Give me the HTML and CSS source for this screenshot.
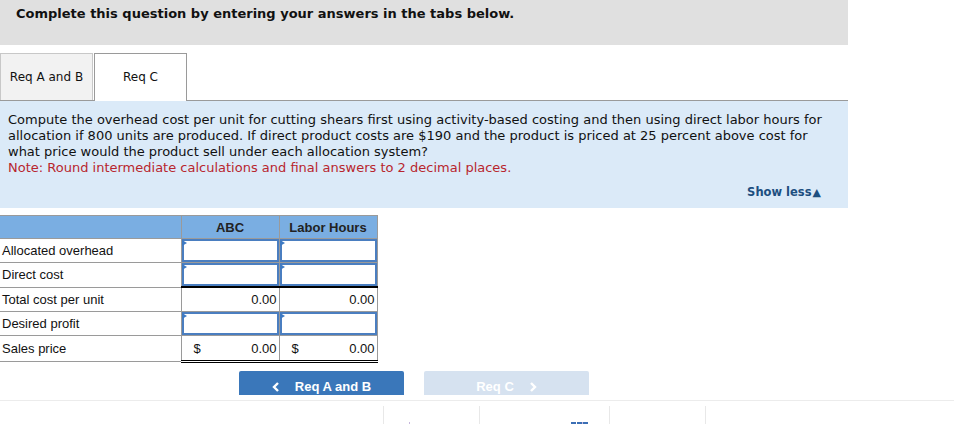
FILE: index.html
```html
<!DOCTYPE html>
<html>
<head>
<meta charset="utf-8">
<link rel="stylesheet" href="styles.css">
</head>
<body>
<div class="wrap">
  <div class="banner">Complete this question by entering your answers in the tabs below.</div>
  <div class="tabs">
    <div class="tab">Req A and B</div>
    <div class="tab active">Req C</div>
  </div>
  <div class="panel">
    <p class="q">Compute the overhead cost per unit for cutting shears first using activity-based costing and then using direct labor hours for allocation if 800 units are produced. If direct product costs are $190 and the product is priced at 25 percent above cost for what price would the product sell under each allocation system?</p>
    <p class="note">Note: Round intermediate calculations and final answers to 2 decimal places.</p>
    <div class="showless">Show less<span class="tri">&#9650;</span></div>
  </div>
  <table class="grid">
    <colgroup><col class="c-label"><col class="c-val"><col class="c-val"></colgroup>
    <thead>
      <tr><th class="h-label"></th><th>ABC</th><th>Labor Hours</th></tr>
    </thead>
    <tbody>
      <tr><td class="label">Allocated overhead</td><td class="inp"><div class="box"></div></td><td class="inp"><div class="box"></div></td></tr>
      <tr><td class="label">Direct cost</td><td class="inp"><div class="box"></div></td><td class="inp"><div class="box"></div></td></tr>
      <tr><td class="label">Total cost per unit</td><td class="calc">0.00</td><td class="calc">0.00</td></tr>
      <tr><td class="label">Desired profit</td><td class="inp"><div class="box"></div></td><td class="inp"><div class="box"></div></td></tr>
      <tr class="final"><td class="label">Sales price</td><td class="calc money"><span>$</span><span>0.00</span></td><td class="calc money"><span>$</span><span>0.00</span></td></tr>
    </tbody>
  </table>
  <div class="nav">
    <div class="btn primary"><svg class="chev" width="8" height="10" viewBox="0 0 8 10"><polyline points="6,1 2,5 6,9" fill="none" stroke="#fff" stroke-width="2.4"/></svg>Req A and B</div>
    <div class="btn disabled">Req C<svg class="chev r" width="8" height="10" viewBox="0 0 8 10"><polyline points="2,1 6,5 2,9" fill="none" stroke="#fff" stroke-width="2.4"/></svg></div>
  </div>
</div>
<div class="footer">
  <div class="seg s1"></div>
  <div class="seg s2"><span class="dot d1"></span></div>
  <div class="seg s3"><span class="bars"><i></i><i></i><i></i></span></div>
  <div class="seg s4"><span class="dot d2"></span></div>
  <div class="seg s5"></div>
</div>
</body>
</html>
```

FILE: styles.css
```css
html, body { margin: 0; padding: 0; background: #fff; }
body { width: 954px; height: 424px; overflow: hidden; }
.wrap { width: 848px; }
.banner {
  background: #e0e0e0;
  height: 45px;
  box-sizing: border-box;
  padding: 6px 16px 0;
  font: bold 13px/16px "DejaVu Sans", sans-serif;
  color: #111;
}
.tabs {
  margin-top: 8px;
  display: flex;
  gap: 1px;
  height: 47px;
  border-bottom: 1px solid #9a9a9a;
}
.tab {
  width: 91px;
  height: 46px;
  border: 1px solid #c8c8c8;
  border-bottom: none;
  background: #f2f2f2;
  font: 12px/46px "DejaVu Sans", sans-serif;
  text-align: center;
  color: #111;
}
.tab.active {
  background: #fff;
  border-color: #9a9a9a;
  height: 47px;
  margin-bottom: -1px;
  position: relative;
}
.panel {
  background: #dbeaf8;
  height: 107px;
  box-sizing: border-box;
  padding: 11px 20px 0 8px;
  font: 13px/16px "DejaVu Sans", sans-serif;
  color: #111;
}
.panel p { margin: 0; }
.note { color: #b8262e; }
.showless {
  text-align: right;
  margin-top: 8px;
  margin-right: 7px;
  font: bold 11.5px/16px "DejaVu Sans", sans-serif;
  color: #1d4f80;
}
.tri { font-size: 11px; margin-left: 1px; }
.grid {
  margin-top: 7px;
  border-collapse: collapse;
  table-layout: fixed;
  width: 377px;
  font: 13px "Liberation Sans", Arial, sans-serif;
  color: #111;
}
.c-label { width: 181px; }
.c-val { width: 98px; }
.grid th {
  background: #7aaee2;
  height: 22px;
  border: 1px solid #9a9a9a;
  font-weight: bold;
  padding: 0;
  text-align: center;
  color: #222;
}
.grid th.h-label { border-left: none; }
.grid td { padding: 0; height: 23px; }
.grid td.label {
  border-bottom: 1px solid #9a9a9a;
  border-right: 1px solid #9a9a9a;
  padding-left: 2px;
}
.grid td.inp {
  border: 1px solid #9a9a9a;
  padding: 0;
}
.box {
  position: relative;
  height: 19px;
  border: 2px solid #4a7ec0;
  background: #fff;
}
.box::before {
  content: "";
  position: absolute;
  left: -2px;
  top: -1px;
  border-left: 5px solid #3e7ac3;
  border-top: 3px solid transparent;
  border-bottom: 3px solid transparent;
}
.grid td.calc {
  border: 1px solid #9a9a9a;
  border-top: 2px solid #000;
  text-align: right;
  padding-right: 2px;
}
.grid tr.final td.calc { border-top: 1px solid #9a9a9a; border-bottom: 3px double #000; }
.grid tr.final td { height: 24px; }
.money span:first-child { float: left; padding-left: 12px; }
.nav {
  margin-top: 8px;
  display: flex;
  gap: 20px;
  padding-left: 239px;
}
.btn {
  width: 165px;
  height: 24px;
  box-sizing: border-box;
  border-radius: 2px 2px 0 0;
  font: bold 13px/31px "Liberation Sans", Arial, sans-serif;
  color: #fff;
  text-align: center;
  overflow: hidden;
}
.btn.primary { background: #3a77ba; }
.btn.disabled { background: #d6e2f0; }
.chev { margin-right: 15px; vertical-align: -1px; }
.chev.r { margin-left: 15px; margin-right: 0; }
.footer {
  margin-top: 5px;
  border-top: 1px solid #ececec;
  display: flex;
  height: 23px;
  padding-top: 5px;
  box-sizing: border-box;
}
.seg { height: 18px; position: relative; }
.s1 { width: 383px; }
.s2 { width: 95px; border-left: 1px solid #e8e8e8; }
.s3 { width: 129px; border-left: 1px solid #e8e8e8; }
.s4 { width: 95px; border-left: 1px solid #e8e8e8; }
.s5 { flex: 1; border-left: 1px solid #e8e8e8; }
.dot { position: absolute; bottom: 0; width: 1px; height: 2px; background: #c6b6dc; }
.d1 { left: 25px; }
.d2 { left: -28px; }
.bars { position: absolute; right: 21px; bottom: -1px; display: flex; gap: 1px; }
.bars i { width: 5px; height: 3px; background: #3b6fb5; }
```
